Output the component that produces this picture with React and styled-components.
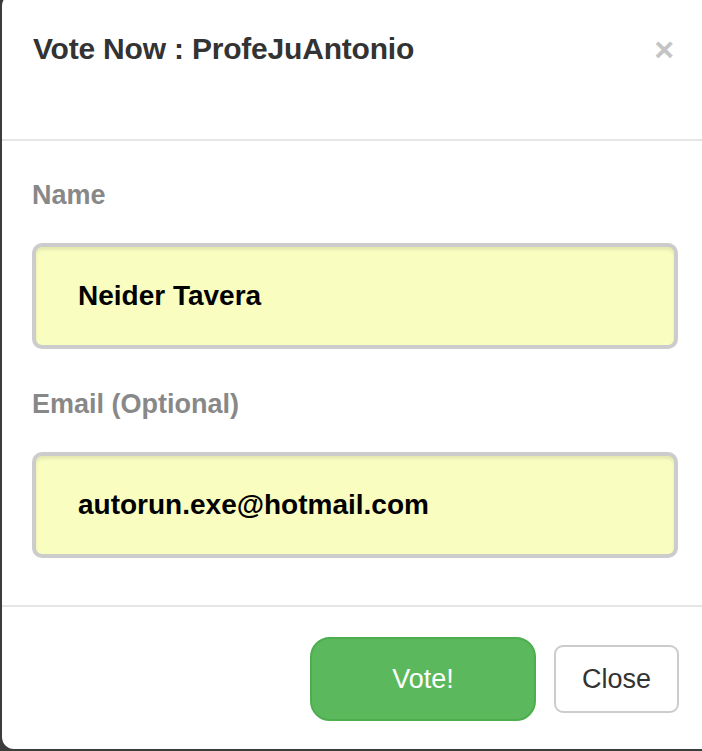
import React from "react";
import styled, { createGlobalStyle } from "styled-components";

const GlobalStyle = createGlobalStyle`
  html, body {
    margin: 0;
    padding: 0;
    background-color: #3c3c3c;
    overflow: hidden;
  }
  * {
    box-sizing: border-box;
  }
`;

const Backdrop = styled.div`
  width: 702px;
  height: 751px;
  padding: 0 0 2px 2px;
  overflow: hidden;
`;

const Modal = styled.div`
  display: flex;
  flex-direction: column;
  width: 712px;
  height: 755px;
  margin-top: -6px;
  background-color: #fff;
  border-radius: 12px;
  font-family: "Liberation Sans", Arial, Helvetica, sans-serif;
`;

const Header = styled.div`
  display: flex;
  align-items: center;
  justify-content: space-between;
  height: 147px;
  padding: 0 28px 36px 31px;
  border-bottom: 2px solid #e5e5e5;
`;

const Title = styled.h4`
  margin: 0;
  font-size: 30px;
  font-weight: bold;
  color: #333;
  letter-spacing: -0.2px;
`;

const CloseX = styled.button`
  border: none;
  background: none;
  padding: 0;
  margin-right: 12px;
  font-family: "Liberation Sans", Arial, sans-serif;
  font-size: 34px;
  font-weight: bold;
  line-height: 1;
  color: #c4c4c4;
  cursor: pointer;
`;

const Body = styled.div`
  display: flex;
  flex-direction: column;
  padding: 41px 25px 47px 30px;
  border-bottom: 2px solid #e5e5e5;
`;

const Field = styled.div`
  display: flex;
  flex-direction: column;
  margin-bottom: ${(p) => (p.last ? "0" : "42px")};
`;

const Label = styled.label`
  font-size: 27px;
  font-weight: bold;
  color: #888;
  margin-bottom: 34px;
  height: 27px;
  line-height: 27px;
`;

const Input = styled.input`
  height: 106px;
  width: 646px;
  padding: 0 42px;
  border: 4px solid #cccccc;
  border-radius: 10px;
  background-color: #f9fdc0;
  box-shadow: inset 0 3px 3px rgba(0, 0, 0, 0.08);
  font-family: "Liberation Sans", Arial, sans-serif;
  font-size: 28px;
  font-weight: bold;
  color: #000;
  outline: none;
`;

const Footer = styled.div`
  display: flex;
  justify-content: flex-end;
  align-items: center;
  gap: 18px;
  padding: 30px 35px 0 0;
`;

const Button = styled.button`
  font-family: "Liberation Sans", Arial, sans-serif;
  font-size: 27px;
  cursor: pointer;
  width: ${(p) => (p.primary ? "226px" : "125px")};
  height: ${(p) => (p.primary ? "84px" : "68px")};
  border-radius: ${(p) => (p.primary ? "20px" : "9px")};
  border: 2px solid ${(p) => (p.primary ? "#4cae4c" : "#cccccc")};
  background-color: ${(p) => (p.primary ? "#5cb85c" : "#fff")};
  color: ${(p) => (p.primary ? "#fff" : "#333")};
`;

export default function App() {
  return (
    <>
      <GlobalStyle />
      <Backdrop>
        <Modal>
          <Header>
            <Title>Vote Now : ProfeJuAntonio</Title>
            <CloseX type="button">×</CloseX>
          </Header>
          <Body>
            <Field>
              <Label>Name</Label>
              <Input name="name" defaultValue="Neider Tavera" />
            </Field>
            <Field last>
              <Label>Email (Optional)</Label>
              <Input name="email" defaultValue="autorun.exe@hotmail.com" />
            </Field>
          </Body>
          <Footer>
            <Button primary>Vote!</Button>
            <Button>Close</Button>
          </Footer>
        </Modal>
      </Backdrop>
    </>
  );
}
